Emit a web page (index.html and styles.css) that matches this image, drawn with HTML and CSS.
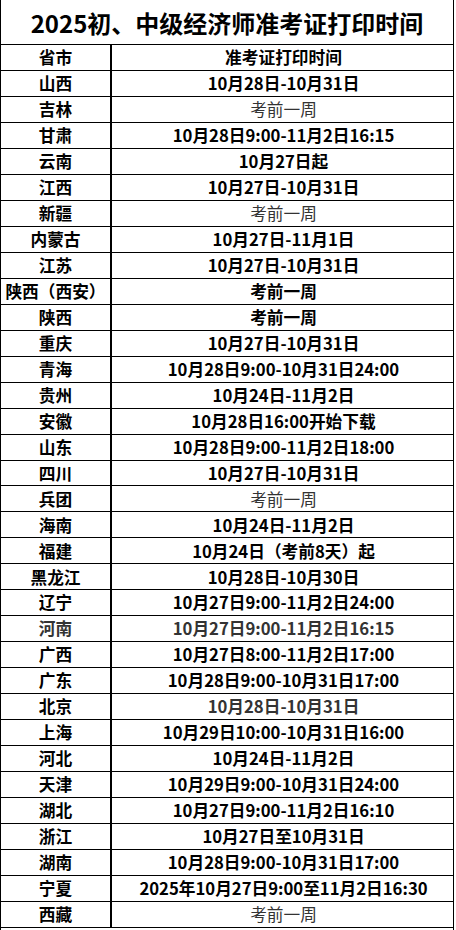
FILE: index.html
```html
<!DOCTYPE html>
<html lang="zh-CN">
<head>
<meta charset="utf-8">
<title>2025初、中级经济师准考证打印时间</title>
<link rel="stylesheet" href="styles.css">
</head>
<body>
<div class="sheet">
  <div class="title">2025初、中级经济师准考证打印时间</div>
  <div class="row"><div class="c1">省市</div><div class="c2">准考证打印时间</div></div>
  <div class="row"><div class="c1">山西</div><div class="c2">10月28日-10月31日</div></div>
  <div class="row"><div class="c1">吉林</div><div class="c2 soft">考前一周</div></div>
  <div class="row"><div class="c1">甘肃</div><div class="c2">10月28日9:00-11月2日16:15</div></div>
  <div class="row"><div class="c1">云南</div><div class="c2">10月27日起</div></div>
  <div class="row"><div class="c1">江西</div><div class="c2">10月27日-10月31日</div></div>
  <div class="row"><div class="c1">新疆</div><div class="c2 soft">考前一周</div></div>
  <div class="row"><div class="c1">内蒙古</div><div class="c2">10月27日-11月1日</div></div>
  <div class="row"><div class="c1">江苏</div><div class="c2">10月27日-10月31日</div></div>
  <div class="row"><div class="c1">陕西（西安）</div><div class="c2">考前一周</div></div>
  <div class="row"><div class="c1">陕西</div><div class="c2">考前一周</div></div>
  <div class="row"><div class="c1">重庆</div><div class="c2">10月27日-10月31日</div></div>
  <div class="row"><div class="c1">青海</div><div class="c2">10月28日9:00-10月31日24:00</div></div>
  <div class="row"><div class="c1">贵州</div><div class="c2">10月24日-11月2日</div></div>
  <div class="row"><div class="c1">安徽</div><div class="c2">10月28日16:00开始下载</div></div>
  <div class="row"><div class="c1">山东</div><div class="c2">10月28日9:00-11月2日18:00</div></div>
  <div class="row"><div class="c1">四川</div><div class="c2">10月27日-10月31日</div></div>
  <div class="row"><div class="c1">兵团</div><div class="c2 soft">考前一周</div></div>
  <div class="row"><div class="c1">海南</div><div class="c2">10月24日-11月2日</div></div>
  <div class="row"><div class="c1">福建</div><div class="c2">10月24日（考前8天）起</div></div>
  <div class="row"><div class="c1">黑龙江</div><div class="c2">10月28日-10月30日</div></div>
  <div class="row"><div class="c1">辽宁</div><div class="c2">10月27日9:00-11月2日24:00</div></div>
  <div class="row grey"><div class="c1">河南</div><div class="c2">10月27日9:00-11月2日16:15</div></div>
  <div class="row"><div class="c1">广西</div><div class="c2">10月27日8:00-11月2日17:00</div></div>
  <div class="row"><div class="c1">广东</div><div class="c2">10月28日9:00-10月31日17:00</div></div>
  <div class="row"><div class="c1">北京</div><div class="c2 greytext">10月28日-10月31日</div></div>
  <div class="row"><div class="c1">上海</div><div class="c2">10月29日10:00-10月31日16:00</div></div>
  <div class="row"><div class="c1">河北</div><div class="c2">10月24日-11月2日</div></div>
  <div class="row"><div class="c1">天津</div><div class="c2">10月29日9:00-10月31日24:00</div></div>
  <div class="row"><div class="c1">湖北</div><div class="c2">10月27日9:00-11月2日16:10</div></div>
  <div class="row"><div class="c1">浙江</div><div class="c2">10月27日至10月31日</div></div>
  <div class="row"><div class="c1">湖南</div><div class="c2">10月28日9:00-10月31日17:00</div></div>
  <div class="row"><div class="c1">宁夏</div><div class="c2">2025年10月27日9:00至11月2日16:30</div></div>
  <div class="row"><div class="c1">西藏</div><div class="c2 soft">考前一周</div></div>
  <div class="row"><div class="c1 blank"></div><div class="c2"></div></div>
</div>
</body>
</html>
```

FILE: styles.css
```css
html, body {
  margin: 0;
  padding: 0;
  background: #fff;
}
body {
  font-family: "Noto Sans CJK SC", "Noto Sans", sans-serif;
  color: #000;
  overflow: hidden;
  height: 930px;
}
.sheet {
  width: 454px;
  box-sizing: border-box;
  border-left: 1px solid #000;
  border-right: 1px solid #000;
}
.title {
  height: 45px;
  box-sizing: border-box;
  border-bottom: 1px solid #000;
  display: flex;
  align-items: center;
  justify-content: center;
  font-size: 24px;
  font-weight: 700;
  line-height: 1;
  padding-top: 1px;
}
.row {
  display: grid;
  grid-template-columns: 111px 1fr;
  height: 25.97px;
  box-sizing: border-box;
  border-bottom: 1px solid #000;
  font-size: 16.7px;
  font-weight: 700;
  line-height: 1;
}
.c1, .c2 {
  display: flex;
  align-items: center;
  justify-content: center;
  white-space: nowrap;
}
.c1 {
  border-right: 2px solid #000;
}
.c1.blank {
  border-right: none;
}
.c2 {
  padding-left: 2px;
}
.soft {
  font-weight: 400;
  color: #333;
}
.grey {
  color: #333;
}
.greytext {
  color: #333;
}
```
